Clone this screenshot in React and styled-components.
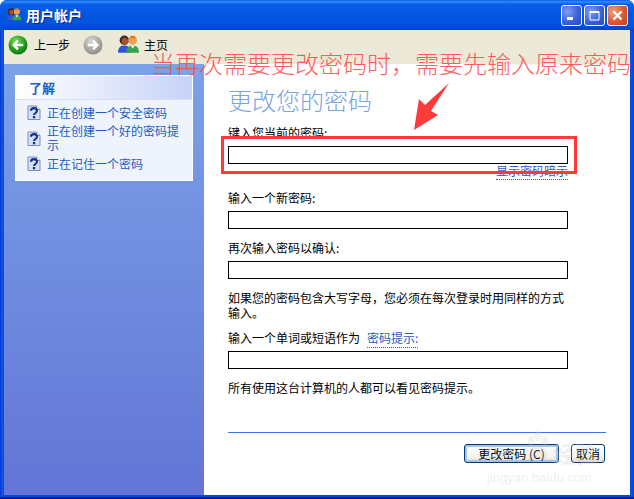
import React from "react";
import styled, { createGlobalStyle } from "styled-components";

const CJK = `"Noto Sans CJK SC", "Liberation Sans", sans-serif`;

const Global = createGlobalStyle`
  html, body { margin: 0; padding: 0; background: #fff; }
  body { font-family: ${CJK}; font-size: 12px; }
  * { box-sizing: border-box; }
`;

const Screen = styled.div`
  position: relative;
  width: 634px;
  height: 499px;
  overflow: hidden;
`;
const Win = styled.div`
  width: 634px;
  height: 499px;
  display: flex;
  flex-direction: column;
  background: linear-gradient(90deg, #0838c8 0, #0a55ec 2px, #0848dc 4px, #0848dc 630px, #0a50e6 632px, #0838c8 634px);
  border-bottom: 2px solid #001c9c;
  border-radius: 7px 7px 0 0;
`;
const TitleBar = styled.div`
  height: 30px;
  flex: none;
  display: flex;
  align-items: center;
  padding: 0 6px 0 6px;
  border-radius: 7px 7px 0 0;
  background: linear-gradient(180deg, #0a5be8 0%, #2f8cf7 6%, #0a5fe8 14%, #0355e0 50%, #0253dd 80%, #0343c8 100%);
`;
const TitleText = styled.span`
  margin-left: 4px;
  color: #fff;
  font-weight: 700;
  font-size: 14px;
  text-shadow: 1px 1px 0 #0a2a8a;
  flex: 1;
`;
const Caps = styled.div`
  display: flex;
  gap: 2px;
`;
const Cap = styled.button`
  width: 21px;
  height: 21px;
  padding: 0;
  border: 1px solid #fff;
  border-radius: 3px;
  display: flex;
  align-items: center;
  justify-content: center;
  background: ${(p) =>
    p.$close
      ? "radial-gradient(circle at 30% 30%, #f0a080, #dc5a30 55%, #c23a12)"
      : "radial-gradient(circle at 30% 30%, #7f9fee, #3a62da 55%, #2546c0)"};
`;
const Body = styled.div`
  flex: 1;
  min-height: 0;
  margin: 0 4px 2px;
  display: flex;
  flex-direction: column;
  background: #fff;
`;
const Toolbar = styled.div`
  height: 34px;
  flex: none;
  background: #ece9d8;
  display: flex;
  align-items: center;
  padding: 0 0 5px 4px;
  font-size: 12px;
  color: #000;
`;
const NavLabel = styled.span`
  margin-left: ${(p) => p.$ml}px;
`;
const Spacer = styled.div`
  width: ${(p) => p.$w}px;
  flex: none;
`;
const Content = styled.div`
  flex: 1;
  min-height: 0;
  display: flex;
`;
const Side = styled.aside`
  width: 200px;
  flex: none;
  background: linear-gradient(180deg, #7ba2e7 0%, #6375d6 100%);
  padding: 11px 11px 0;
`;
const Card = styled.section`
  width: 178px;
  border: 1px solid #fff;
  background: #eff3fb;
`;
const CardHead = styled.div`
  height: 24px;
  padding-left: 13px;
  display: flex;
  align-items: center;
  font-weight: 700;
  font-size: 13px;
  color: #215dc6;
  background: linear-gradient(90deg, #fff 0%, #c6d3f7 100%);
  border-bottom: 1px solid #d6dff7;
`;
const CardList = styled.ul`
  list-style: none;
  margin: 0;
  padding: 5px 0 9px 11px;
  display: flex;
  flex-direction: column;
  gap: 4px;
`;
const CardItem = styled.li`
  display: flex;
  align-items: center;
  gap: 6px;
  color: #215dc6;
  font-size: 12px;
  line-height: 14px;
`;
const ItemText = styled.span`
  width: 132px;
`;
const Main = styled.main`
  flex: 1;
  min-width: 0;
  padding: 21px 24px 0 24px;
  display: flex;
  flex-direction: column;
`;
const Heading = styled.h1`
  margin: 0 0 11px 0;
  font-size: 24px;
  line-height: 30px;
  font-weight: 300;
  color: #7ba2e7;
`;
const Label = styled.label`
  display: block;
  font-size: 12px;
  line-height: 14px;
  color: #000;
  height: 14px;
  margin-bottom: 6px;
`;
const Field = styled.input`
  display: block;
  width: 340px;
  height: 18px;
  border: 1px solid #000;
  background: #fff;
  padding: 0 2px;
  outline: none;
`;
const Link = styled.a`
  color: #215dc6;
  border-bottom: 1px dotted #215dc6;
  padding-bottom: 1px;
  font-size: 12px;
  line-height: 14px;
`;
const LinkRow = styled.div`
  width: 340px;
  height: 16px;
  display: flex;
  justify-content: flex-end;
`;
const Gap = styled.div`
  height: ${(p) => p.$h}px;
  flex: none;
`;
const Para = styled.p`
  margin: 0;
  width: 345px;
  font-size: 12px;
  line-height: 15px;
  color: #000;
`;
const LinkGap = styled.span`
  margin-left: 7px;
`;
const Footer = styled.div`
  margin-top: 37px;
  width: 378px;
  border-top: 1px solid #3a75e0;
  padding-top: 11px;
  display: flex;
  justify-content: flex-end;
  gap: 11px;
`;
const Btn = styled.button`
  height: 19px;
  width: ${(p) => p.$w}px;
  padding: 0;
  margin-right: 1px;
  font-family: ${CJK};
  font-size: 12px;
  line-height: 15px;
  color: #000;
  border: 1px solid #003c74;
  border-radius: 3px;
  background: linear-gradient(180deg, #fff 0%, #f5f4ee 70%, #dcd8cc 100%);
  box-shadow: ${(p) => (p.$primary ? "inset 0 0 0 2px #a9c2ea" : "none")};
`;
const Headline = styled.div`
  position: absolute;
  left: 151px;
  top: 47px;
  white-space: nowrap;
  font-size: 24px;
  line-height: 32px;
  font-weight: 300;
  color: #ff4a4a;
  opacity: 0.88;
`;
const RedBox = styled.div`
  position: absolute;
  left: 221px;
  top: 136px;
  width: 356px;
  height: 38px;
  border: 3px solid #ff3a3a;
`;
const Arrow = styled.svg`
  position: absolute;
  left: 410px;
  top: 80px;
`;
const Mark = styled.div`
  position: absolute;
  left: ${(p) => p.$x}px;
  top: ${(p) => p.$y}px;
  font-family: "Liberation Sans", ${CJK};
  font-size: ${(p) => p.$s}px;
  font-weight: ${(p) => p.$w || 400};
  line-height: 1;
  color: rgba(200, 200, 200, 0.3);
  white-space: nowrap;
  pointer-events: none;
`;
const Paw = styled.svg`
  position: absolute;
  left: 525px;
  top: 431px;
`;

const Users = ({ size = 16 }) => (
  <svg width={size} height={size * 0.82} viewBox="0 0 22 18">
    <circle cx="7" cy="5" r="4.5" fill="#3a2a22" />
    <ellipse cx="7.5" cy="6" rx="3" ry="3.4" fill="#a8542a" />
    <path d="M1 17c0-5 2-7 6-7s6 2 6 7z" fill="#2f55d8" />
    <circle cx="15" cy="5" r="4.2" fill="#f0a050" />
    <path d="M12 3c1-3 5-3 6 0z" fill="#e07a20" />
    <path d="M9 17c0-5 2-7 6-7s6 2 6 7z" fill="#37a44a" />
    <path d="M13 10l2 3 2-3z" fill="#fff" />
  </svg>
);

const NavBtn = ({ dir, on }) => (
  <svg width="20" height="20" viewBox="0 0 21 21">
    <defs>
      <radialGradient id={`g${dir}`} cx="40%" cy="30%" r="75%">
        <stop offset="0%" stopColor={on ? "#7fdc60" : "#d8d8d4"} />
        <stop offset="55%" stopColor={on ? "#27a31d" : "#aaa9a4"} />
        <stop offset="100%" stopColor={on ? "#0a7010" : "#8c8b86"} />
      </radialGradient>
    </defs>
    <circle cx="10.5" cy="10.5" r="10" fill={`url(#g${dir})`} />
    <path
      d={dir === "l" ? "M16 10.5H7M10.5 6l-4.5 4.5 4.5 4.5" : "M5 10.5h9M10.5 6l4.5 4.5-4.5 4.5"}
      stroke="#fff"
      strokeWidth="2.6"
      fill="none"
    />
  </svg>
);

const Help = () => (
  <svg width="14" height="15" viewBox="0 0 14 15" style={{ flex: "none" }}>
    <path d="M1 1h8.500l3.500 3.500V14.500H1z" fill="#d4e2f8" stroke="#7a8fb4" />
    <path d="M9.500 1v3.500H13" fill="#fff" stroke="#7a8fb4" />
    <path d="M4 5.800c0-3.600 6-3.600 6 0 0 2.200-3 2.200-3 4.200" fill="none" stroke="#12308f" strokeWidth="2.100" />
    <rect x="5.900" y="11" width="2.300" height="2.300" fill="#12308f" />
  </svg>
);

export default function App() {
  return (
    <Screen>
      <Global />
      <Win>
        <TitleBar>
          <Users />
          <TitleText>用户帐户</TitleText>
          <Caps>
            <Cap aria-label="最小化">
              <svg width="11" height="11" viewBox="0 0 11 11"><rect x="1" y="7" width="6" height="3" fill="#fff" /></svg>
            </Cap>
            <Cap aria-label="最大化">
              <svg width="13" height="13" viewBox="0 0 13 13"><path d="M2 2.500h9v8.500h-9z" fill="none" stroke="#fff" /><rect x="2" y="2" width="9" height="2" fill="#fff" /></svg>
            </Cap>
            <Cap $close aria-label="关闭">
              <svg width="13" height="13" viewBox="0 0 13 13"><path d="M2.500 2.500l8 8M10.500 2.500l-8 8" stroke="#fff" strokeWidth="2.200" /></svg>
            </Cap>
          </Caps>
        </TitleBar>
        <Body>
          <Toolbar>
            <NavBtn dir="l" on />
            <NavLabel $ml={6}>上一步</NavLabel>
            <Spacer $w={13} />
            <NavBtn dir="r" />
            <Spacer $w={14} />
            <Users size={23} />
            <NavLabel $ml={4}>主页</NavLabel>
          </Toolbar>
          <Content>
            <Side>
              <Card>
                <CardHead>了解</CardHead>
                <CardList>
                  <CardItem><Help /><ItemText>正在创建一个安全密码</ItemText></CardItem>
                  <CardItem><Help /><ItemText>正在创建一个好的密码提示</ItemText></CardItem>
                  <CardItem><Help /><ItemText>正在记住一个密码</ItemText></CardItem>
                </CardList>
              </Card>
            </Side>
            <Main>
              <Heading>更改您的密码</Heading>
              <Label>键入您当前的密码:</Label>
              <Field />
              <LinkRow><Link>显示密码暗示</Link></LinkRow>
              <Gap $h={11} />
              <Label>输入一个新密码:</Label>
              <Field />
              <Gap $h={12} />
              <Label>再次输入密码以确认:</Label>
              <Field />
              <Gap $h={11} />
              <Para>如果您的密码包含大写字母，您必须在每次登录时用同样的方式输入。</Para>
              <Gap $h={11} />
              <Label>输入一个单词或短语作为<LinkGap /><Link>密码提示:</Link></Label>
              <Field />
              <Gap $h={11} />
              <Para>所有使用这台计算机的人都可以看见密码提示。</Para>
              <Footer>
                <Btn $primary $w={95}>更改密码 (C)</Btn>
                <Btn $w={34}>取消</Btn>
              </Footer>
            </Main>
          </Content>
        </Body>
      </Win>
      <Headline>当再次需要更改密码时，需要先输入原来密码</Headline>
      <RedBox />
      <Arrow width="44" height="54" viewBox="0 0 44 54">
        <path d="M39 3 L21 31 L28 35 L4 50 L9 19 L15 25 Z" fill="#ff3a3a" />
      </Arrow>
      <Paw width="26" height="30" viewBox="0 0 26 30">
        <g fill="rgba(200,200,200,0.22)">
          <ellipse cx="6" cy="10" rx="3.500" ry="5" />
          <ellipse cx="13" cy="5" rx="3.500" ry="5" />
          <ellipse cx="20" cy="10" rx="3.500" ry="5" />
          <path d="M13 14c5 0 10 6 9 11-1 4-6 3-9 2-3 1-8 2-9-2-1-5 4-11 9-11z" />
        </g>
      </Paw>
      <Mark $x={486} $y={444} $s={17} $w={700}>Bai</Mark>
      <Mark $x={553} $y={444} $s={22} $w={700}>经验</Mark>
      <Mark $x={487} $y={471} $s={13}>jingyan.baidu.com</Mark>
    </Screen>
  );
}
